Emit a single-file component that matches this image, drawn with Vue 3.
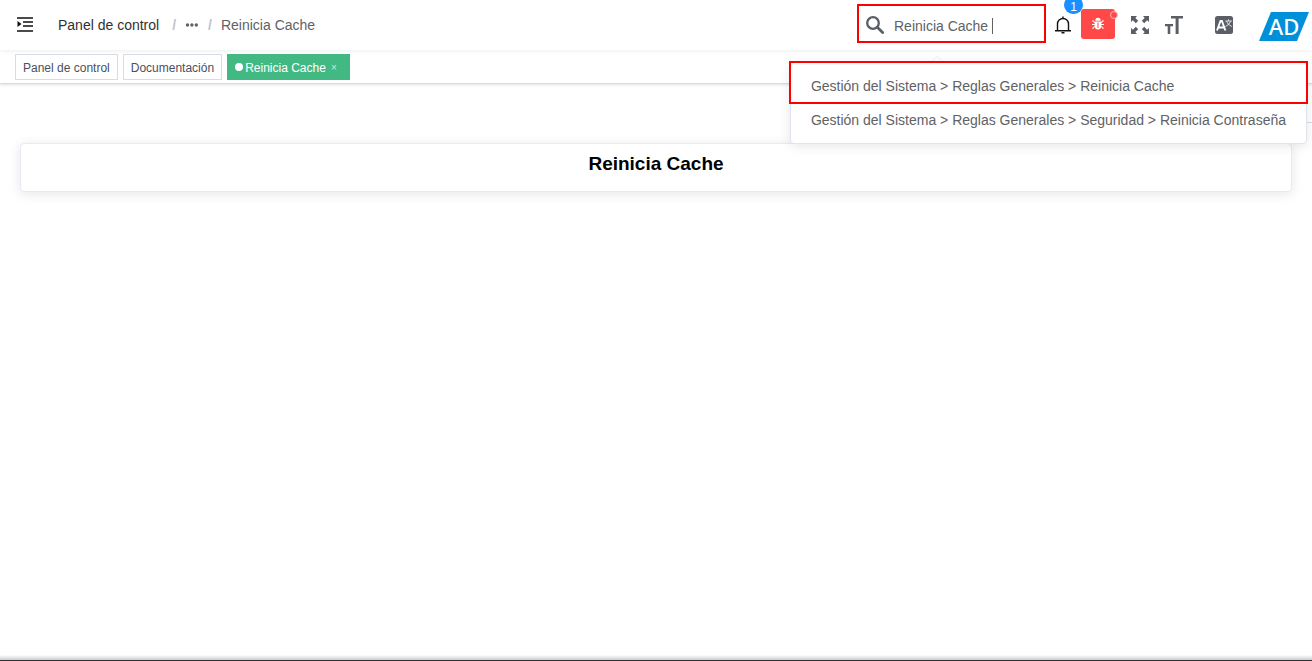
<script setup>
import { ref } from 'vue'

const query = ref('Reinicia Cache ')
const tags = [
  { label: 'Panel de control', active: false },
  { label: 'Documentación', active: false },
  { label: 'Reinicia Cache', active: true },
]
const results = [
  'Gestión del Sistema > Reglas Generales > Reinicia Cache',
  'Gestión del Sistema > Reglas Generales > Seguridad > Reinicia Contraseña',
]
</script>

<template>
  <div class="layout">
    <header class="navbar">
      <button class="icon-button toggle" aria-label="Menú">
        <svg width="16" height="16" viewBox="0 0 16 16">
          <path d="M0 0.200h16v1.600H0zM6 4.200h10v1.600H6zM6 8.200h10v1.600H6zM0 13.200h16v1.600H0zM0.500 4l4 3-4 3z" fill="#111" />
        </svg>
      </button>
      <nav class="breadcrumb">
        <a href="#" class="home">Panel de control</a>
        <span class="slash">/</span>
        <button class="icon-button dots" aria-label="Más">
          <svg width="14" height="14" viewBox="0 0 14 14" fill="#606266">
            <circle cx="2.500" cy="7" r="1.700" /><circle cx="6.900" cy="7" r="1.700" /><circle cx="11.300" cy="7" r="1.700" />
          </svg>
        </button>
        <span class="slash">/</span>
        <span class="current">Reinicia Cache</span>
      </nav>

      <div class="tools">
        <div class="search">
          <label for="search" aria-label="Buscar">
            <svg width="18" height="18" viewBox="0 0 18 18" fill="none" stroke="#5a5e66">
              <circle cx="7" cy="7" r="5.800" stroke-width="2.300" />
              <path d="M11.300 11.300L16.600 16.500" stroke-width="2.800" stroke-linecap="round" />
            </svg>
          </label>
          <div class="field">
            <input id="search" v-model="query" type="text" autocomplete="off" />
            <span class="caret"></span>
          </div>
          <ul class="results">
            <li v-for="item in results" :key="item">{{ item }}</li>
          </ul>
        </div>

        <button class="icon-button bell" aria-label="Notificaciones">
          <svg width="18" height="18" viewBox="0 0 18 18" fill="none" stroke="#111" stroke-width="1.400">
            <path d="M3.500 14.500V8a5.500 5.500 0 0 1 11 0v6.500M1 14.700h16M9 2.500V0.500M7.500 16.800h3" />
          </svg>
          <span class="badge">1</span>
        </button>

        <button class="bug" aria-label="Errores">
          <svg width="12" height="14" viewBox="0 0 12 14" fill="none" stroke="#fff">
            <path d="M3.300 3.700a2.700 2.900 0 0 1 5.400 0z" fill="#fff" stroke="none" />
            <path d="M2.700 4.500h6.600v4.200a3.300 3.800 0 0 1-6.600 0z" fill="#fff" stroke="none" />
            <path d="M0 7.500h3M9 7.500h3M1 3v1.500l2 1M11 3v1.500l-2 1M1 12v-1.500l2-1M11 12v-1.500l-2-1" />
            <path d="M6 5.500v5.500" stroke="#ff4949" />
          </svg>
          <span class="bug-dot"></span>
        </button>

        <button class="icon-button fullscreen" aria-label="Pantalla completa">
          <svg width="18" height="18" viewBox="0 0 18 18" fill="#5a5e66">
            <path d="M0 0h6L4.300 1.900 7.200 4.800 4.800 7.200 1.900 4.300 0 6z" />
            <path d="M18 0v6l-1.900-1.700-2.900 2.900-2.400-2.400 2.900-2.900L12 0z" />
            <path d="M18 18h-6l1.700-1.900-2.900-2.900 2.400-2.400 2.900 2.900L18 12z" />
            <path d="M0 18v-6l1.900 1.700 2.900-2.900 2.400 2.400-2.900 2.900L6 18z" />
          </svg>
        </button>

        <button class="icon-button size" aria-label="Tamaño">
          <svg width="18" height="18" viewBox="0 0 18 18" fill="#5a5e66">
            <path d="M6 0h12v2.500h-4.400V18h-3V2.500H6zM0 8h8v2.300H5.300V18H2.700v-7.700H0z" />
          </svg>
        </button>

        <button class="icon-button language" aria-label="Idioma">
          <svg width="18" height="18" viewBox="0 0 18 18">
            <rect width="18" height="18" rx="2.500" fill="#5a5e66" />
            <path d="M2 14.500L5.500 5h1.400l3.500 9.500M3.500 11.500h5.400" fill="none" stroke="#fff" stroke-width="1.900" />
            <path d="M10.300 5h6.600M13.600 3.300V5M11.500 5.200q1.300 3.800 5.300 5.300M15.700 5.200q-1.300 3.800-5.300 5.300" fill="none" stroke="#fff" stroke-width="0.800" />
          </svg>
        </button>

        <button class="avatar">AD</button>
      </div>
    </header>

    <nav class="tags">
      <a v-for="tag in tags" :key="tag.label" href="#" class="tag" :class="{ active: tag.active }">
        <span v-if="tag.active" class="tag-dot"></span><span class="tag-label">{{ tag.label }}</span><span v-if="tag.active" class="close">×</span>
      </a>
    </nav>

    <main>
      <div class="divider"></div>
      <section class="card">
        <h3>Reinicia Cache</h3>
      </section>
    </main>
    <footer></footer>
  </div>
</template>

<style>
body {
  background: #fff;
}
</style>

<style scoped>
* {
  box-sizing: border-box;
}
.layout {
  display: flex;
  flex-direction: column;
  min-height: 100vh;
  overflow: hidden;
  font-family: "Liberation Sans", Arial, sans-serif;
  font-size: 14px;
  color: #606266;
}
a {
  text-decoration: none;
}
button {
  font: inherit;
  border: 0;
  padding: 0;
}
svg {
  display: block;
}
.icon-button {
  background: none;
  flex: none;
}
.navbar {
  position: relative;
  z-index: 2;
  display: flex;
  align-items: center;
  height: 50px;
  padding: 0 3px 0 17px;
  background: #fff;
  box-shadow: 0 1px 4px rgba(0, 21, 41, 0.08);
}
.toggle {
  margin-right: 25px;
}
.breadcrumb {
  display: flex;
  align-items: center;
  white-space: nowrap;
}
.home {
  color: #303133;
}
.slash {
  margin: 0 9px 0 13px;
  color: #c0c4cc;
  font-weight: 700;
}
.dots + .slash {
  margin: 0 9px;
}
.tools {
  display: flex;
  align-items: center;
  margin-left: auto;
}
.search {
  position: relative;
  display: flex;
  align-items: center;
  width: 189px;
  height: 39px;
  margin: 0 8px 3px 0;
  padding: 2px 7px 0;
  border: 2px solid #f00;
}
.field {
  position: relative;
  margin-left: 10px;
}
.field input {
  display: block;
  width: 130px;
  height: 20px;
  margin-top: 2px;
  padding: 0;
  border: 0;
  outline: 0;
  background: none;
  color: #606266;
  font: inherit;
}
.caret {
  position: absolute;
  top: 4px;
  left: 98px;
  width: 1px;
  height: 16px;
  background: #606266;
}
.results {
  position: absolute;
  top: 56px;
  right: -263px;
  margin: 0;
  padding: 6px 0;
  list-style: none;
  line-height: 34px;
  white-space: nowrap;
  background: #fff;
  border: 1px solid #dfe4ed;
  border-radius: 4px;
  box-shadow: 0 2px 12px rgba(0, 0, 0, 0.1);
}
.results li {
  padding: 0 20px;
}
.results::before {
  content: "";
  position: absolute;
  top: -2px;
  left: -2px;
  right: -2px;
  height: 39px;
  border: 2px solid #f00;
}
.results::after {
  content: "";
  position: absolute;
  top: -6px;
  left: 142px;
  width: 7px;
  height: 7px;
  border: solid #ebeef5;
  border-width: 1px 0 0 1px;
  transform: rotate(45deg);
  clip-path: polygon(0 0, 100% 0, 0 100%);
}
.bell {
  position: relative;
  margin-right: 9px;
}
.badge {
  position: absolute;
  top: -20px;
  left: 10px;
  width: 19px;
  height: 18px;
  padding-top: 4px;
  border-radius: 9px;
  background: #1890ff;
  color: #fff;
  font-size: 12px;
  line-height: 14px;
}
.bug {
  position: relative;
  display: flex;
  align-items: center;
  justify-content: center;
  width: 34px;
  height: 30px;
  margin: 0 16px 2px 0;
  border-radius: 3px;
  background: #ff4949;
}
.bug-dot {
  position: absolute;
  top: 2px;
  right: -3px;
  width: 8px;
  height: 8px;
  border: 1px solid #ffb8b8;
  border-radius: 50%;
  background: #ff4949;
}
.fullscreen {
  margin-right: 16px;
}
.size {
  margin-right: 32px;
}
.language {
  margin-right: 26px;
}
.avatar {
  width: 50px;
  height: 29px;
  margin-top: 3px;
  background: #0090d9;
  color: #fff;
  clip-path: polygon(24% 0, 100% 0, 76% 100%, 0 100%);
  font-family: "Noto Sans", sans-serif;
  font-size: 22px;
  font-weight: 500;
  line-height: 29px;
}
.tags {
  display: flex;
  align-items: center;
  gap: 5px;
  height: 34px;
  padding: 0 15px;
  background: #fff;
  border-bottom: 1px solid #d8dce5;
  box-shadow: 0 1px 3px rgba(0, 0, 0, 0.12);
}
.tag {
  display: flex;
  align-items: center;
  height: 26px;
  padding: 0 7px;
  border: 1px solid #d8dce5;
  color: #495060;
  font-size: 12px;
  line-height: 14px;
  white-space: nowrap;
}
.tag-label {
  padding-top: 2px;
}
.tag.active {
  border-color: #42b983;
  background: #42b983;
  color: #fff;
}
.tag-dot {
  width: 8px;
  height: 8px;
  margin-right: 2px;
  border-radius: 50%;
  background: #fff;
}
.close {
  width: 16px;
  padding-top: 2px;
  color: #c6eada;
  font-size: 10px;
  text-align: center;
}
main {
  flex: 1;
}
.divider {
  width: 240px;
  height: 39px;
  margin-left: auto;
  border-bottom: 1px solid #d8dce5;
}
.card {
  margin: 20px;
  padding: 9px 20px 17px;
  border: 1px solid #e6ebf5;
  border-radius: 4px;
  background: #fff;
  box-shadow: 0 2px 12px rgba(0, 0, 0, 0.1);
}
h3 {
  margin: 0;
  color: #000;
  font-size: 19px;
  line-height: 21px;
  text-align: center;
}
footer {
  height: 6px;
  border-bottom: 1px solid #303133;
  background: linear-gradient(#fff, #ccc);
}
</style>
